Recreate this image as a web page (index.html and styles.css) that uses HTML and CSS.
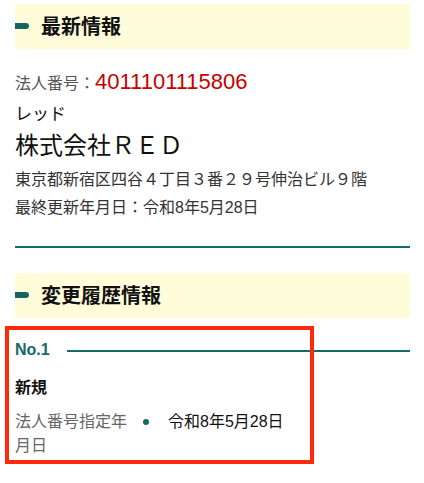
FILE: index.html
```html
<!DOCTYPE html>
<html lang="ja">
<head>
<meta charset="utf-8">
<title>株式会社ＲＥＤ</title>
<link rel="stylesheet" href="styles.css">
</head>
<body>
<main class="page">
  <section class="latest">
    <h2 class="section-title"><span class="mark"></span>最新情報</h2>
    <div class="corp">
      <p class="corp-number"><span class="label">法人番号：</span><span class="number">4011101115806</span></p>
      <p class="kana">レッド</p>
      <p class="name">株式会社ＲＥＤ</p>
      <p class="address">東京都新宿区四谷４丁目３番２９号伸治ビル９階</p>
      <p class="updated">最終更新年月日：令和8年5月28日</p>
    </div>
  </section>
  <section class="history">
    <h2 class="section-title"><span class="mark"></span>変更履歴情報</h2>
    <div class="entry">
      <div class="entry-head"><span class="entry-no">No.1</span><span class="entry-rule"></span></div>
      <p class="entry-type">新規</p>
      <dl class="entry-row">
        <dt>法人番号指定年月日</dt>
        <dd>令和8年5月28日</dd>
      </dl>
      <div class="highlight"></div>
    </div>
  </section>
</main>
</body>
</html>
```

FILE: styles.css
```css
* { box-sizing: border-box; }
html, body { margin: 0; padding: 0; background: #fff; }
body {
  font-family: "Liberation Sans", "Noto Sans CJK JP", sans-serif;
  color: #222;
  min-height: 483px;
}
.page {
  padding: 4px 14px 30px 15px;
}
p { margin: 0; }

.section-title {
  margin: 0;
  height: 45px;
  background: #fffcda;
  border-radius: 3px;
  display: flex;
  align-items: center;
  gap: 12px;
  font-size: 20px;
  font-weight: bold;
  color: #111;
  line-height: 1;
}
.mark {
  display: block;
  width: 14px;
  height: 6px;
  background: #146464;
  border-radius: 0 3px 3px 0;
  margin-top: -2px;
}

.corp {
  padding-top: 19px;
  padding-bottom: 24px;
  border-bottom: 2px solid #176a6a;
}
.corp-number {
  line-height: 28px;
  font-size: 16px;
}
.corp-number .label { color: #555; }
.corp-number .number {
  color: #c80000;
  font-size: 22px;
}
.kana {
  font-size: 17px;
  line-height: 34px;
  color: #111;
}
.name {
  font-size: 24px;
  line-height: 28px;
  color: #111;
}
.address {
  margin-top: 6px;
  font-size: 16px;
  line-height: 28px;
  color: #333;
}
.updated {
  font-size: 16px;
  line-height: 28px;
  color: #333;
}

.history { margin-top: 25px; }

.entry {
  position: relative;
  padding-top: 20px;
}
.entry-head {
  display: flex;
  align-items: center;
  gap: 17px;
  line-height: 24px;
}
.entry-no {
  font-size: 16px;
  font-weight: bold;
  color: #176a6a;
}
.entry-rule {
  flex: 1;
  height: 2px;
  background: #176a6a;
  margin-top: 2px;
}
.entry-type {
  margin-top: 14px;
  font-size: 16px;
  font-weight: bold;
  line-height: 24px;
  color: #111;
}
.entry-row {
  margin: 10px 0 0;
  display: flex;
  align-items: flex-start;
  font-size: 16px;
  line-height: 24px;
}
.entry-row dt {
  flex: 0 0 112px;
  color: #666;
}
.entry-row dd {
  margin: 0;
  position: relative;
  padding-left: 41px;
  color: #111;
}
.entry-row dd::before {
  content: "";
  position: absolute;
  left: 16px;
  top: 9px;
  width: 6px;
  height: 6px;
  border-radius: 50%;
  background: #176a6a;
}
.highlight {
  position: absolute;
  left: -10px;
  top: 8px;
  width: 309px;
  height: 138px;
  border: 4px solid #ff2a0a;
  pointer-events: none;
}
```
